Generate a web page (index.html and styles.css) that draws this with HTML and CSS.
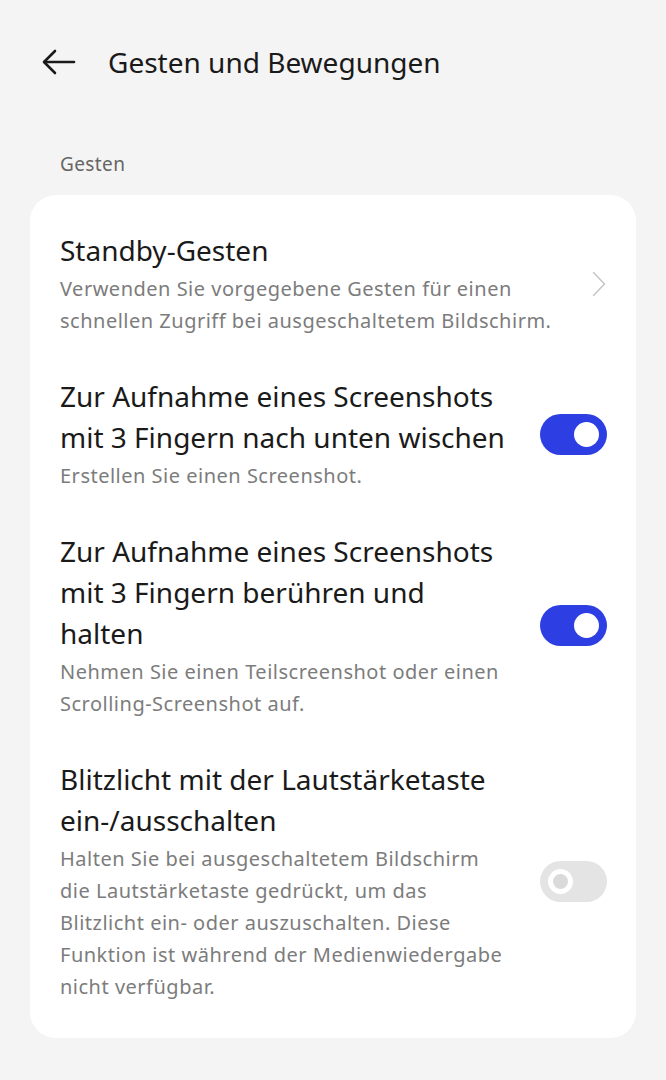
FILE: index.html
```html
<!DOCTYPE html>
<html lang="de">
<head>
    <meta charset="UTF-8">
    <meta name="viewport" content="width=device-width, initial-scale=1.0">
    <title>Gesten und Bewegungen</title>
    <link rel="stylesheet" href="styles.css">
</head>
<body>
    <header class="topbar">
        <button class="back" aria-label="Zurück">
            <svg width="34" height="26" viewBox="0 0 34 26" fill="none" stroke="#1a1a1a" stroke-width="2.6" stroke-linecap="round" stroke-linejoin="round">
                <path d="M32 13H3"/>
                <path d="M13 2L2 13L13 24"/>
            </svg>
        </button>
        <h1>Gesten und Bewegungen</h1>
    </header>

    <div class="section-label">Gesten</div>

    <section class="card">
        <div class="item">
            <div class="text">
                <div class="title">Standby-Gesten</div>
                <div class="sub">Verwenden Sie vorgegebene Gesten für einen schnellen Zugriff bei ausgeschaltetem Bildschirm.</div>
            </div>
            <svg class="chevron" width="14" height="26" viewBox="0 0 14 26" fill="none" stroke="#c6c6c6" stroke-width="1.6" stroke-linecap="round" stroke-linejoin="round">
                <path d="M1.5 1.5L12.5 13L1.5 24.5"/>
            </svg>
        </div>

        <div class="item">
            <div class="text">
                <div class="title">Zur Aufnahme eines Screenshots mit 3 Fingern nach unten wischen</div>
                <div class="sub">Erstellen Sie einen Screenshot.</div>
            </div>
            <span class="switch on"></span>
        </div>

        <div class="item">
            <div class="text">
                <div class="title">Zur Aufnahme eines Screenshots mit 3 Fingern berühren und halten</div>
                <div class="sub">Nehmen Sie einen Teilscreenshot oder einen Scrolling-Screenshot auf.</div>
            </div>
            <span class="switch on"></span>
        </div>

        <div class="item">
            <div class="text">
                <div class="title">Blitzlicht mit der Lautstärketaste ein-/ausschalten</div>
                <div class="sub">Halten Sie bei ausgeschaltetem Bildschirm die Lautstärketaste gedrückt, um das Blitzlicht ein- oder auszuschalten. Diese Funktion ist während der Medienwiedergabe nicht verfügbar.</div>
            </div>
            <span class="switch disabled"></span>
        </div>
    </section>
</body>
</html>
```

FILE: styles.css
```css
body {
    font-family: "Noto Sans", Arial, sans-serif;
    background-color: #f4f4f4;
    margin: 0;
    color: #1a1a1a;
}

.topbar {
    display: flex;
    align-items: center;
    height: 124px;
    padding-left: 42px;
}

.back {
    background: none;
    border: none;
    padding: 0;
    width: 34px;
    height: 26px;
    margin-right: 32px;
    cursor: pointer;
}

.topbar h1 {
    margin: 0;
    font-size: 28px;
    font-weight: 400;
}

.section-label {
    padding: 26px 60px 0;
    font-size: 19px;
    line-height: 28px;
    letter-spacing: 0.4px;
    color: #666;
}

.card {
    background-color: #fff;
    border-radius: 26px;
    margin: 17px 30px 0;
    padding: 15px 0 16px;
}

.item {
    display: flex;
    align-items: center;
    padding: 20px 29px 19px 30px;
}

.text {
    flex: 1;
    margin-right: 32px;
}

.title {
    font-size: 28px;
    line-height: 41px;
}

.sub {
    margin-top: 2px;
    font-size: 20px;
    line-height: 32px;
    letter-spacing: 0.5px;
    color: #7c7c7c;
}

.chevron {
    flex: none;
    margin-right: 1px;
}

.switch {
    flex: none;
    position: relative;
    width: 67px;
    height: 41px;
    border-radius: 21px;
    background-color: #2d3fe3;
}

.switch::after {
    content: "";
    position: absolute;
    top: 8px;
    right: 8px;
    width: 25px;
    height: 25px;
    border-radius: 50%;
    background-color: #fff;
}

.switch.disabled {
    background-color: #e4e4e4;
}

.switch.disabled::after {
    top: 8px;
    right: auto;
    left: 8px;
    width: 15px;
    height: 15px;
    border: 5px solid #fff;
    background-color: #dadada;
}
```
